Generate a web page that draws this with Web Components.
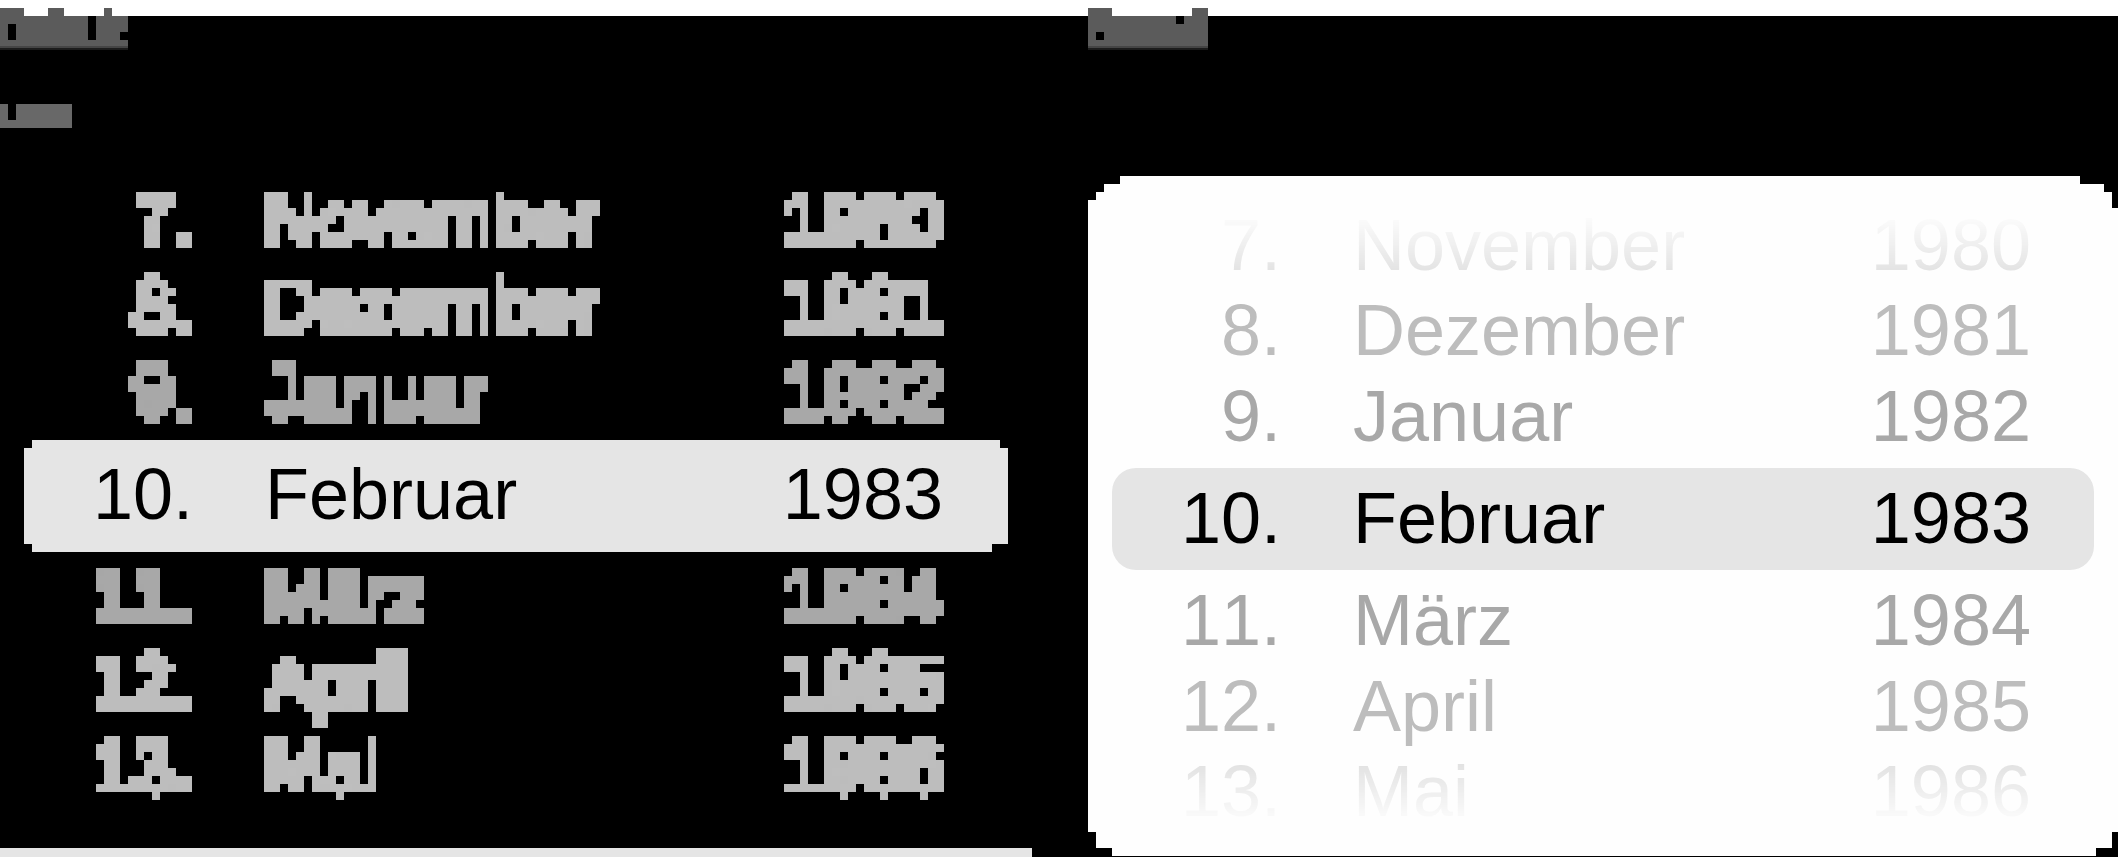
<!DOCTYPE html>
<html lang="de">
<head>
<meta charset="utf-8">
<title>Datumsauswahl</title>
<style>
  body { margin: 0; background: #000; font-family: "Liberation Sans", Arial, sans-serif; }
</style>
</head>
<body>
<picker-page>
  <block-caption slot="left" kind="title"></block-caption>
  <block-caption slot="left" kind="label"></block-caption>
  <date-wheel slot="left" mode="mosaic">
    <date-row slot="before" tone="far" edge="top" day="7." month="November" year="1980"></date-row>
    <date-row slot="before" tone="far" day="8." month="Dezember" year="1981"></date-row>
    <date-row slot="before" tone="near" day="9." month="Januar" year="1982"></date-row>
    <date-row slot="selected" day="10." month="Februar" year="1983"></date-row>
    <date-row slot="after" tone="near" day="11." month="März" year="1984"></date-row>
    <date-row slot="after" tone="far" day="12." month="April" year="1985"></date-row>
    <date-row slot="after" tone="far" edge="bottom" day="13." month="Mai" year="1986"></date-row>
  </date-wheel>
  <block-caption slot="right" kind="second"></block-caption>
  <date-wheel slot="right" mode="smooth">
    <date-row slot="before" tone="far" edge="top" day="7." month="November" year="1980"></date-row>
    <date-row slot="before" tone="far" day="8." month="Dezember" year="1981"></date-row>
    <date-row slot="before" tone="near" day="9." month="Januar" year="1982"></date-row>
    <date-row slot="selected" day="10." month="Februar" year="1983"></date-row>
    <date-row slot="after" tone="near" day="11." month="März" year="1984"></date-row>
    <date-row slot="after" tone="far" day="12." month="April" year="1985"></date-row>
    <date-row slot="after" tone="far" edge="bottom" day="13." month="Mai" year="1986"></date-row>
  </date-wheel>
</picker-page>

<script>
class PickerPage extends HTMLElement {
  constructor() {
    super();
    this.attachShadow({ mode: 'open' }).innerHTML = `
      <style>
        :host { display: block; overflow: hidden; background: linear-gradient(#fff 16px, #000 0); }
        main { display: grid; grid-template-columns: 1088fr 1030fr; padding-top: 8px; padding-bottom: 1px; }
        section { display: flex; flex-direction: column; min-width: 0; }
        .strip { height: 9px; margin: auto 56px -1px 0; background: #e5e5e5; }
      </style>
      <main>
        <section><slot name="left"></slot><div class="strip"></div></section>
        <section><slot name="right"></slot></section>
      </main>`;
  }
}

/* Captions made of 8px blocks */
class BlockCaption extends HTMLElement {
  connectedCallback() {
    const shapes = {
      title: [128, 40, '#5b5b5b', 'M0 0H24V8H48V0H64V8H88V32H96V8H104V0H112V8H128V24H120V32H128V40H0ZM8 16V32H16V16Z'],
      label: [72, 24, '#686868', 'M0 0H8V16H16V0H72V24H0Z'],
      second: [120, 40, '#5b5b5b', 'M0 0H24V8H104V0H120V40H0ZM8 24V32H16V24ZM88 8V16H96V8Z']
    };
    const [w, h, fill, d] = shapes[this.getAttribute('kind')];
    this.attachShadow({ mode: 'open' }).innerHTML = `
      <style>
        :host { display: block; }
        :host([kind="label"]) { margin-top: 56px; }
        svg { display: block; overflow: visible; }
      </style>
      <svg width="${w}" height="${h}" aria-hidden="true">
        <path d="${d}" fill="${fill}" fill-rule="evenodd"/>
        ${h === 40 ? `<path d="M0 38H${w}V40H0Z" fill="#454545"/><path d="M0 40H${w}V42H0Z" fill="#1c1c1c"/>` : ''}
      </svg>`;
  }
}

class DateRow extends HTMLElement {
  connectedCallback() {
    this.setAttribute('role', 'option');
    this.setAttribute('aria-selected', this.slot === 'selected');
    this.attachShadow({ mode: 'open' }).innerHTML = `
      <style>
        :host {
          display: grid; grid-template-columns: 169px 1fr auto; column-gap: 72px;
          align-items: center; box-sizing: border-box; height: 86px;
          padding: 0 var(--row-end, 62px) 2px 0;
          font-size: 72px; line-height: 80px; font-kerning: none; color: #000; white-space: nowrap;
        }
        :host([slot="selected"]) { height: 102px; }
        :host([edge]) { height: 84px; }
        :host([tone="near"]) { color: #a8a8a8; }
        :host([tone="far"]) { color: #bdbdbd; }
        :host([edge="top"]) { mask-image: var(--fade-top, none); }
        :host([edge="bottom"]) { mask-image: var(--fade-bottom, none); }
        .day { text-align: right; }
      </style>
      <span class="day">${this.getAttribute('day')}</span>
      <span>${this.getAttribute('month')}</span>
      <span>${this.getAttribute('year')}</span>`;
  }
}

class DateWheel extends HTMLElement {
  constructor() {
    super();
    this.attachShadow({ mode: 'open' }).innerHTML = `
      <style>
        :host { display: block; }
        svg { position: absolute; width: 0; height: 0; }

        :host([mode="mosaic"]) { margin-top: 48px; --row-end: 65px; }
        :host([mode="mosaic"]) .group { padding: 4px 80px 4px 24px; filter: url(#mosaic); }
        :host([mode="mosaic"]) .after { padding-top: 2px; }
        :host([mode="mosaic"]) .selected {
          margin: 0 80px 0 24px; padding: 4px 0 6px; background: #e5e5e5;
          clip-path: polygon(8px 0, calc(100% - 8px) 0, calc(100% - 8px) 8px, 100% 8px,
            100% calc(100% - 8px), calc(100% - 16px) calc(100% - 8px), calc(100% - 16px) 100%,
            8px 100%, 8px calc(100% - 8px), 0 calc(100% - 8px), 0 8px, 8px 8px);
        }

        :host([mode="smooth"]) {
          margin-top: 128px; padding: 28px 24px 22px; background: #fefefe; --row-end: 63px;
          --fade-top: linear-gradient(transparent 10%, rgba(0, 0, 0, .52));
          --fade-bottom: linear-gradient(rgba(0, 0, 0, .52), transparent 90%);
          clip-path: polygon(32px 0, calc(100% - 38px) 0, calc(100% - 38px) 8px,
            calc(100% - 14px) 8px, calc(100% - 14px) 16px, calc(100% - 6px) 16px,
            calc(100% - 6px) 32px, 100% 32px, 100% calc(100% - 24px),
            calc(100% - 6px) calc(100% - 24px), calc(100% - 6px) calc(100% - 8px),
            calc(100% - 22px) calc(100% - 8px), calc(100% - 22px) 100%, 24px 100%,
            24px calc(100% - 8px), 8px calc(100% - 8px), 8px calc(100% - 24px),
            0 calc(100% - 24px), 0 24px, 8px 24px, 8px 16px, 16px 16px, 16px 8px, 32px 8px);
        }
        :host([mode="smooth"]) .selected { margin: 8px 0; border-radius: 24px; background: #e5e5e5; }
      </style>
      <svg aria-hidden="true">
        <!-- Fills every 8px cell that the text touches -->
        <filter id="mosaic" filterUnits="objectBoundingBox" primitiveUnits="userSpaceOnUse"
                x="0" y="0" width="1" height="1" color-interpolation-filters="sRGB">
          <feComponentTransfer in="SourceGraphic" result="hard">
            <feFuncA type="discrete" tableValues="0 1"/>
          </feComponentTransfer>
          <feMorphology in="hard" operator="dilate" radius="4" result="wide"/>
          <feFlood x="4" y="4" width="1" height="1" flood-color="#fff" result="dot"/>
          <feComposite in="dot" in2="dot" operator="over" x="0" y="0" width="8" height="8" result="cell"/>
          <feTile in="cell" result="grid"/>
          <feComposite in="wide" in2="grid" operator="in" result="samples"/>
          <feMorphology in="samples" operator="dilate" radius="3" result="a"/>
          <feOffset in="a" dx="-1" dy="0" result="b"/>
          <feMerge result="c"><feMergeNode in="a"/><feMergeNode in="b"/></feMerge>
          <feOffset in="c" dx="0" dy="-1" result="d"/>
          <feMerge><feMergeNode in="c"/><feMergeNode in="d"/></feMerge>
        </filter>
      </svg>
      <div role="listbox" aria-label="Datum">
        <div class="group before"><slot name="before"></slot></div>
        <div class="selected"><slot name="selected"></slot></div>
        <div class="group after"><slot name="after"></slot></div>
      </div>`;
  }
}

customElements.define('date-row', DateRow);
customElements.define('date-wheel', DateWheel);
customElements.define('block-caption', BlockCaption);
customElements.define('picker-page', PickerPage);
</script>
</body>
</html>
